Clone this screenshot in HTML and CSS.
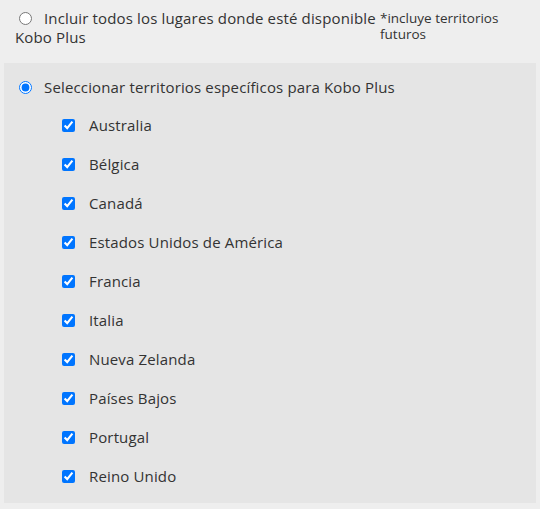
FILE: index.html
```html
<!DOCTYPE html>
<html lang="es">
<head>
<meta charset="utf-8">
<link rel="stylesheet" href="styles.css">
</head>
<body>
<div class="page">
  <div class="option-all">
    <span class="note">*incluye territorios futuros</span>
    <label class="radio-label"><input type="radio" name="terr" class="radio">Incluir todos los lugares donde esté disponible Kobo Plus</label>
  </div>
  <div class="panel">
    <label class="radio-label panel-radio"><input type="radio" name="terr" class="radio" checked>Seleccionar territorios específicos para Kobo Plus</label>
    <ul class="list">
      <li><label><input type="checkbox" class="check" checked>Australia</label></li>
      <li><label><input type="checkbox" class="check" checked>Bélgica</label></li>
      <li><label><input type="checkbox" class="check" checked>Canadá</label></li>
      <li><label><input type="checkbox" class="check" checked>Estados Unidos de América</label></li>
      <li><label><input type="checkbox" class="check" checked>Francia</label></li>
      <li><label><input type="checkbox" class="check" checked>Italia</label></li>
      <li><label><input type="checkbox" class="check" checked>Nueva Zelanda</label></li>
      <li><label><input type="checkbox" class="check" checked>Países Bajos</label></li>
      <li><label><input type="checkbox" class="check" checked>Portugal</label></li>
      <li><label><input type="checkbox" class="check" checked>Reino Unido</label></li>
    </ul>
  </div>
</div>
</body>
</html>
```
FILE: styles.css
```css
html, body {
  margin: 0;
  padding: 0;
  background: #eeeeee;
}
body {
  font-family: "Open Sans", sans-serif;
  font-size: 15px;
  letter-spacing: 0.15px;
  color: #333333;
}
.page {
  padding: 0 4px 6px 4px;
}
.option-all {
  padding: 9px 0 0 11px;
  height: 63px;
  box-sizing: border-box;
  line-height: 19px;
}
.note {
  float: right;
  width: 156px;
  font-size: 13.5px;
  letter-spacing: 0;
  line-height: 16px;
  margin-top: 1px;
}
.radio-label {
  display: block;
}
.radio {
  margin: 0 12px 0 4px;
  width: 13px;
  height: 13px;
  vertical-align: -1px;
}
.panel {
  background: #e5e5e5;
  padding: 14px 0 7px 11px;
}
.panel-radio {
  line-height: 20px;
}
.list {
  list-style: none;
  margin: 9px 0 0 0;
  padding: 0 0 0 47px;
}
.list li {
  height: 39px;
  line-height: 39px;
}
.check {
  margin: 0 14px 0 0;
  width: 13px;
  height: 13px;
  vertical-align: -1px;
}
```
